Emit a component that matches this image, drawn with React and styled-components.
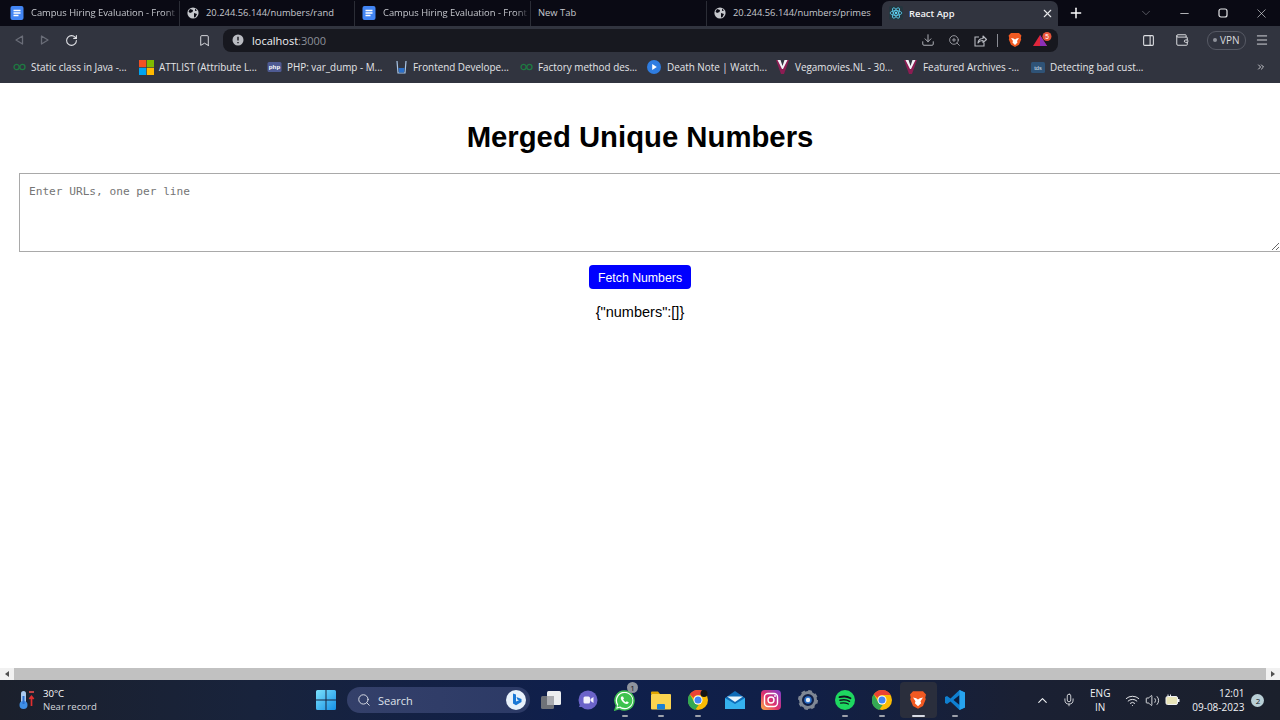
import React from 'react';
import styled, { createGlobalStyle } from 'styled-components';
import {
  RotateCw, Bookmark, Download, ZoomIn, PanelRight, Wallet, Menu, X, Plus, ChevronDown, Minus,
  Search, Mic, Wifi, Volume2, ChevronUp, ChevronsRight,
} from 'lucide-react';

const GlobalStyle = createGlobalStyle`
  html, body { margin: 0; padding: 0; height: 100%; overflow: hidden; background: #fff; }
  body { font-family: "Liberation Sans", Arial, sans-serif; }
  ::placeholder { color: #757575; }
`;

const ui = `"Open Sans", "Noto Sans", sans-serif`;

const Screen = styled.div`
  display: flex;
  flex-direction: column;
  width: 1280px;
  height: 720px;
  overflow: hidden;
`;

const TabStrip = styled.div`
  display: flex;
  align-items: flex-end;
  height: 26px;
  padding-left: 3px;
  box-sizing: border-box;
  background: #0a0a14;
  flex-shrink: 0;
`;

const Tab = styled.div`
  display: flex;
  align-items: center;
  gap: ${p => (p.$active ? 6 : 7)}px;
  width: ${p => p.$w}px;
  height: 25px;
  padding: 0 0 ${p => (p.$active ? 1 : 2)}px 7px;
  box-sizing: border-box;
  flex-shrink: 0;
  white-space: nowrap;
  font: ${p => (p.$active ? 600 : 400)} 9.4px ${ui};
  color: ${p => (p.$active ? '#f2f3f5' : '#c6c8ce')};
  background: ${p => (p.$active ? '#31343f' : 'transparent')};
  border-radius: ${p => (p.$active ? '7px 7px 0 0' : 0)};
  border-right: ${p => (p.$active || p.$last ? 0 : '1px solid #2b2d36')};
`;

const TabTitle = styled.span`
  flex: 1;
  -webkit-mask-image: ${p => (p.$fade ? 'linear-gradient(to right, #000 90%, transparent)' : 'none')};
  mask-image: ${p => (p.$fade ? 'linear-gradient(to right, #000 90%, transparent)' : 'none')};
`;

const TabClose = styled.span`
  display: flex;
  margin-right: 4px;
  color: #e8e9ec;
`;

const WindowControls = styled.div`
  display: flex;
  align-items: center;
  flex: 1;
  height: 26px;
  color: #e6e7ea;
`;

const NewTab = styled.span`
  display: flex;
  margin-left: 10px;
  margin-right: 43px;
  color: #fff;
`;

const WinButton = styled.span`
  display: flex;
  justify-content: center;
  width: 38.5px;
  color: ${p => (p.$dim ? '#8b8d96' : '#e6e7ea')};
`;

const Toolbar = styled.div`
  display: flex;
  align-items: center;
  height: 28px;
  background: #31343f;
  flex-shrink: 0;
`;

const NavGroup = styled.div`
  display: flex;
  align-items: center;
  width: 198px;
  padding-left: 13px;
  box-sizing: border-box;
  gap: 14px;
`;

const NavIcon = styled.span`
  display: flex;
  color: ${p => (p.$dim ? '#6a6d78' : '#e3e4e8')};
`;

const AddressBar = styled.div`
  display: flex;
  align-items: center;
  width: 835px;
  height: 23px;
  margin-left: 12px;
  padding: 0 5px 0 9px;
  box-sizing: border-box;
  background: #17181f;
  border-radius: 8px;
  font: 400 11px ${ui};
`;

const Url = styled.span`
  margin-left: 8px;
  flex: 1;
  color: #f0f1f3;
  span { color: #8d9099; }
`;

const AddressTools = styled.div`
  display: flex;
  align-items: center;
  gap: 13px;
  color: #b7b9c0;
`;

const Divider = styled.span`
  width: 1px;
  height: 13px;
  margin: 0 -4px 0 -3px;
  background: #8a8c94;
`;

const ShieldSlot = styled.span`
  display: flex;
  margin-right: -3px;
`;

const RightTools = styled.div`
  display: flex;
  align-items: center;
  margin-left: 84px;
  gap: 20px;
  color: #dcdde1;
`;

const VpnPill = styled.div`
  display: flex;
  align-items: center;
  gap: 3px;
  height: 17px;
  padding: 0 5px;
  border: 1px solid #565964;
  border-radius: 9px;
  font: 400 10px ${ui};
  color: #d8d9dd;
  margin-left: -2px;
  margin-right: -11px;
  i { width: 4px; height: 4px; border-radius: 50%; background: #8f929b; }
`;

const BookmarksBar = styled.div`
  display: flex;
  align-items: center;
  height: 29px;
  padding: 0 0 3px 13px;
  box-sizing: border-box;
  background: #31343f;
  flex-shrink: 0;
  font: 400 9.9px ${ui};
  color: #e4e5e8;
`;

const BookmarkItem = styled.div`
  display: flex;
  align-items: center;
  gap: 5px;
  width: ${p => p.$w}px;
  white-space: nowrap;
  flex-shrink: 0;
`;

const MoreBookmarks = styled.span`
  display: flex;
  margin-left: 107px;
`;

const Viewport = styled.main`
  flex: 1;
  display: flex;
  flex-direction: column;
  align-items: center;
  overflow: hidden;
  background: #fff;
  padding-top: 35px;
  min-height: 0;
`;

const Title = styled.h1`
  margin: 0 0 17px;
  font-size: 29.3px;
  line-height: 38px;
  font-weight: 700;
  color: #000;
`;

const UrlInput = styled.textarea`
  align-self: flex-start;
  display: block;
  width: 1262px;
  height: 79px;
  margin: 0 0 13px 19px;
  padding: 10px 9px;
  box-sizing: border-box;
  flex-shrink: 0;
  border: 1px solid #a9a9a9;
  font: 11.15px/15px "DejaVu Sans Mono", monospace;
  outline: none;
`;

const FetchButton = styled.button`
  width: 102px;
  height: 24px;
  padding: 1px 0 0;
  border: 0;
  border-radius: 4px;
  background: #0000ff;
  color: #fff;
  font: 400 12.3px "Liberation Sans", Arial, sans-serif;
`;

const Result = styled.div`
  margin-top: 15px;
  font-size: 14.5px;
  line-height: 17px;
  color: #000;
`;

const ScrollBar = styled.div`
  display: flex;
  align-items: center;
  justify-content: space-between;
  height: 12px;
  flex-shrink: 0;
  background: #c1c1c1;
`;

const ScrollArrow = styled.span`
  display: flex;
  align-items: center;
  justify-content: center;
  width: 14px;
  height: 12px;
  background: #f1f1f1;
  &::before {
    content: '';
    border-style: solid;
    border-width: 3px 0 3px 4px;
    border-color: transparent transparent transparent #505050;
    transform: ${p => (p.$left ? 'rotate(180deg)' : 'none')};
  }
`;

const Taskbar = styled.footer`
  display: flex;
  align-items: center;
  height: 40px;
  flex-shrink: 0;
  background: linear-gradient(to right, #1b202c 0%, #18233c 20%, #0f1f4c 45%, #101f47 62%, #1a2033 80%, #1b202c 100%);
  color: #fff;
  font: 400 9.6px ${ui};
`;

const Weather = styled.div`
  display: flex;
  align-items: center;
  gap: 7px;
  width: 316px;
  padding-left: 18px;
  box-sizing: border-box;
  line-height: 13px;
  small { display: block; font-size: 9.6px; color: #d5d7dc; }
`;

const SearchBox = styled.div`
  display: flex;
  align-items: center;
  gap: 7px;
  width: 183px;
  height: 26px;
  margin-left: 11px;
  padding-left: 10px;
  box-sizing: border-box;
  position: relative;
  border-radius: 13px;
  background: linear-gradient(to right, #34406a, #2c3a66);
  font-size: 11px;
  color: #dfe2ea;
`;

const BingBadge = styled.span`
  position: absolute;
  right: 4px;
  top: 3px;
  display: flex;
`;

const Dock = styled.div`
  display: flex;
  align-items: center;
  margin-left: 3px;
`;

const DockItem = styled.div`
  position: relative;
  display: flex;
  align-items: center;
  justify-content: center;
  width: 36.7px;
  height: 36px;
  border-radius: 4px;
  background: ${p => (p.$active ? '#2a2e3c' : 'transparent')};
  &::after {
    content: '';
    display: ${p => (p.$open ? 'block' : 'none')};
    position: absolute;
    bottom: 1px;
    left: 50%;
    width: ${p => (p.$active ? 13 : 6)}px;
    height: 2px;
    margin-left: ${p => (p.$active ? -6.5 : -3)}px;
    border-radius: 1px;
    background: ${p => (p.$active ? '#d8dbe3' : '#9da1ab')};
  }
`;

const Count = styled.span`
  position: absolute;
  top: 0;
  right: 5px;
  width: 11px;
  height: 11px;
  border-radius: 50%;
  background: #8f949e;
  font-size: 8px;
  line-height: 11px;
  text-align: center;
  color: #10131c;
`;

const Tray = styled.div`
  display: flex;
  align-items: center;
  flex: 1;
  color: #f0f1f4;
  padding-left: 62px;
`;

const MicSlot = styled.span`
  display: flex;
  margin-left: 12px;
`;

const Lang = styled.div`
  width: 24px;
  margin-left: 12px;
  text-align: center;
  line-height: 14px;
  font-size: 10px;
`;

const TrayIcons = styled.div`
  display: flex;
  align-items: center;
  gap: 5px;
  margin-left: 13px;
`;

const Clock = styled.div`
  margin-left: 12px;
  text-align: right;
  line-height: 14px;
  font-size: 10px;
`;

const Notice = styled.span`
  width: 13px;
  height: 13px;
  margin-left: 7px;
  border-radius: 50%;
  background: #b9cfd6;
  color: #12161f;
  font-size: 8px;
  line-height: 13px;
  text-align: center;
`;

// favicons and app logos
const DocsIcon = () => (
  <svg width="14" height="14" viewBox="0 0 14 14">
    <rect x="0.5" width="13" height="14" rx="2" fill="#4285f4" />
    <path d="M3.5 4.5h7M3.5 7h7M3.5 9.5h5" stroke="#fff" strokeWidth="1.3" />
  </svg>
);

const GlobeIcon = () => (
  <svg width="12" height="12" viewBox="0 0 12 12">
    <circle cx="6" cy="6" r="5.6" fill="#c5c7cc" />
    <path d="M3 2l3 1-.5 2L3 6 1.5 4.5zM7 6l3 1-1.5 3L7 10.5z M8 1.5l2 2-2 .5z" fill="#0a0a14" />
  </svg>
);

const ReactIcon = () => (
  <svg width="14" height="14" viewBox="-12 -12 24 24" fill="none" stroke="#61dafb" strokeWidth="1.3">
    <rect x="-12" y="-12" width="24" height="24" rx="3" fill="#24363f" stroke="none" />
    <circle r="2" fill="#61dafb" stroke="none" />
    <ellipse rx="10" ry="4" />
    <ellipse rx="10" ry="4" transform="rotate(60)" />
    <ellipse rx="10" ry="4" transform="rotate(120)" />
  </svg>
);

const Triangle = ({ left }) => (
  <svg width="12" height="12" viewBox="0 0 12 12" fill="none" stroke="currentColor" strokeWidth="1.3">
    <path d={left ? 'M9.5 2v8L3 6z' : 'M2.5 2v8L9 6z'} strokeLinejoin="round" />
  </svg>
);

const InfoDot = () => (
  <svg width="12" height="12" viewBox="0 0 12 12">
    <circle cx="6" cy="6" r="5.5" fill="#b9bbc1" />
    <path d="M6 2.8v3.6M6 8v1.2" stroke="#17181f" strokeWidth="1.4" />
  </svg>
);

const ShareIcon = () => (
  <svg width="13" height="13" viewBox="0 0 13 13" fill="none" stroke="currentColor" strokeWidth="1.1">
    <path d="M5 3H1v9h9V8.500" />
    <path d="M4 9c.3-3 2.500-4.500 5-4.500V2l3.500 3.500L9 8.500V6.500C7 6.500 5 7 4 9z" strokeLinejoin="round" />
  </svg>
);

const BraveIcon = ({ size = 16 }) => (
  <svg width={size} height={size} viewBox="0 0 16 16">
    <path d="M4 1h8l2.4 2.6-.6 2.4.4 1.4-2.2 5.4L8 15l-4-2.2-2.2-5.4.4-1.4-.6-2.4z" fill="#f15a22" />
    <path d="M4 6l2.5.5L8 7.5l1.5-1L12 6l-2 3 .5 1.5L8 13l-2.5-2.5L6 9z" fill="#fff" />
  </svg>
);

const RewardsIcon = () => (
  <svg width="20" height="16" viewBox="0 0 20 16">
    <path d="M0 14L7 3l7 11z" fill="#e0263c" />
    <path d="M7 3l7 11H7z" fill="#8b2fb8" />
    <circle cx="14" cy="4.5" r="4.5" fill="#e8553a" />
    <text x="14" y="6.8" fontSize="6.5" textAnchor="middle" fill="#fff" fontFamily="Liberation Sans">5</text>
  </svg>
);

const LeafIcon = () => (
  <svg width="13" height="8" viewBox="0 0 13 8" fill="none" stroke="#1f7a42" strokeWidth="1.3">
    <circle cx="3.6" cy="4" r="2.6" />
    <circle cx="9.4" cy="4" r="2.6" />
  </svg>
);

const MsIcon = () => (
  <svg width="15" height="15" viewBox="0 0 15 15">
    <rect width="7.2" height="7.2" fill="#f25022" />
    <rect x="7.8" width="7.2" height="7.2" fill="#7fba00" />
    <rect y="7.8" width="7.2" height="7.2" fill="#00a4ef" />
    <rect x="7.8" y="7.8" width="7.2" height="7.2" fill="#ffb900" />
  </svg>
);

const PhpIcon = () => (
  <svg width="15" height="10" viewBox="0 0 14 10">
    <rect width="14" height="10" rx="1.5" fill="#4f5b93" />
    <text x="7" y="7.4" fontSize="6.2" fontWeight="700" textAnchor="middle" fill="#fff" fontFamily="Liberation Sans">php</text>
  </svg>
);

const CupIcon = () => (
  <svg width="13" height="14" viewBox="-1 0 13 14" fill="none">
    <path d="M1 1l1 12h7l1-12" stroke="#a9c6e8" strokeWidth="1.2" />
    <path d="M2.5 8h6l-.5 4.5H3z" fill="#2a6fc9" />
  </svg>
);

const PlayIcon = () => (
  <svg width="15" height="14" viewBox="0 0 15 14">
    <circle cx="7" cy="7" r="7" fill="#2f7de1" />
    <path d="M5.2 4l4.6 3-4.6 3z" fill="#fff" />
  </svg>
);

const VegaIcon = () => (
  <svg width="14" height="14" viewBox="0 0 14 14">
    <path d="M0 0h4l2.5 7L9 0h4L8 14H5z" fill="#8c1d53" />
    <path d="M1.5 0h3l2 6 2-6h3L7 9H6z" fill="#f2f2f6" />
  </svg>
);

const TdsIcon = () => (
  <svg width="14" height="11" viewBox="0 0 14 11">
    <rect width="14" height="11" rx="1.5" fill="#2f5377" />
    <text x="7" y="7.6" fontSize="5.6" textAnchor="middle" fill="#dbe6ef" fontFamily="Liberation Sans">tds</text>
  </svg>
);

const ThermoIcon = () => (
  <svg width="18" height="20" viewBox="0 0 18 20">
    <rect x="3" y="1" width="5" height="13" rx="2.5" fill="#a9c8ee" />
    <circle cx="5.5" cy="15" r="4" fill="#3f8fe6" />
    <rect x="4.5" y="6" width="2" height="8" fill="#2a6fd0" />
    <path d="M11 2h5" stroke="#e84b4b" strokeWidth="1.6" />
    <path d="M13.5 16V7M11.3 9l2.2-2.6L15.7 9" stroke="#e02f2f" strokeWidth="1.7" fill="none" />
  </svg>
);

const WindowsIcon = () => (
  <svg width="20" height="20" viewBox="0 0 20 20">
    <defs>
      <linearGradient id="win" x1="0" y1="0" x2="1" y2="1">
        <stop offset="0" stopColor="#7be0fb" />
        <stop offset="1" stopColor="#1590e6" />
      </linearGradient>
    </defs>
    <path d="M0 1.5A1.5 1.5 0 0 1 1.5 0h8v9.5H0zM10.500 0h8A1.500 1.500 0 0 1 20 1.500v8h-9.500zM0 10.500h9.500V20h-8A1.500 1.500 0 0 1 0 18.500zM10.500 10.500H20v8a1.500 1.500 0 0 1-1.500 1.500h-8z" fill="url(#win)" />
  </svg>
);

const BingIcon = () => (
  <svg width="20" height="20" viewBox="0 0 20 20">
    <circle cx="10" cy="10" r="10" fill="#e8f1fb" />
    <path d="M7 3.500l3 1v7l3-1.300-1.700-.8-.8-2.300 5 1.800v3l-5.500 3.300-3-1.700z" fill="#1b78d6" />
  </svg>
);

const TaskViewIcon = () => (
  <svg width="20" height="20" viewBox="0 0 20 20">
    <rect x="0" y="6" width="13" height="13" rx="1.500" fill="#6f7278" />
    <rect x="6" y="1" width="14" height="14" rx="1.500" fill="#eceef0" />
    <rect x="6" y="6" width="7" height="9" fill="#a9abb0" />
  </svg>
);

const MeetIcon = () => (
  <svg width="20" height="20" viewBox="0 0 20 20">
    <circle cx="10" cy="10" r="9.500" fill="#6b63c9" />
    <path d="M1 17l2-5 4 5z" fill="#6b63c9" />
    <rect x="5.500" y="6.500" width="6.500" height="7" rx="1.500" fill="#f3f2fc" />
    <path d="M12.500 9l3-2v6l-3-2z" fill="#f3f2fc" />
  </svg>
);

const WhatsappIcon = () => (
  <svg width="21" height="21" viewBox="0 0 21 21">
    <path d="M10.500 1a9.500 9.500 0 0 0-8 14.600L1 20l4.500-1.400A9.500 9.500 0 1 0 10.500 1z" fill="#fff" stroke="#3fc152" strokeWidth="1.500" />
    <path d="M10.500 3a7.500 7.500 0 0 0-6.300 11.500l-.8 2.800 2.900-.9A7.500 7.500 0 1 0 10.500 3z" fill="#3ec34f" />
    <path d="M7.500 6.500c-1 1-1 2.500.5 4.500s3.500 3.200 5 3c1-.2 1.700-.8 1.700-1.700l-2-1-.9.900c-1-.4-2.200-1.600-2.700-2.700l.9-.9-1-2.100z" fill="#fff" />
  </svg>
);

const FolderIcon = () => (
  <svg width="20" height="19" viewBox="0 0 20 19">
    <path d="M0 1.500A1 1 0 0 1 1 .5h6l2 2.500H0z" fill="#e0a500" />
    <rect y="3" width="20" height="15.500" rx="1" fill="#fbd34f" />
    <rect x="6" y="13" width="8" height="5.500" rx="1" fill="#1b7fd4" />
  </svg>
);

const ChromeIcon = ({ dot }) => (
  <svg width="20" height="20" viewBox="0 0 20 20">
    <circle cx="10" cy="10" r="10" fill="#fbbc04" />
    <path d="M10 0a10 10 0 0 1 8.700 5H10a5 5 0 0 0-4.500 2.900L1.800 4.300A10 10 0 0 1 10 0z" fill="#ea4335" />
    <path d="M1.800 4.300l4.400 7.800a5 5 0 0 0 4.500 2.900L7 20A10 10 0 0 1 1.800 4.300z" fill="#34a853" />
    <circle cx="10" cy="10" r="4.500" fill="#fff" />
    <circle cx="10" cy="10" r="3.500" fill="#4285f4" />
    {dot && <circle cx="16" cy="3.500" r="3.500" fill="#141414" />}
  </svg>
);

const MailIcon = () => (
  <svg width="20" height="18" viewBox="0 0 20 18">
    <path d="M0 7l10-7 10 7v11H0z" fill="#0f6cb8" />
    <path d="M0 7l10 6 10-6v11H0z" fill="#35b1ee" />
    <path d="M2 5.500h16L10 11z" fill="#eaf6fd" />
  </svg>
);

const InstagramIcon = () => (
  <svg width="20" height="20" viewBox="0 0 20 20" fill="none">
    <defs>
      <linearGradient id="insta" x1="0" y1="1" x2="1" y2="0">
        <stop offset="0" stopColor="#fdb545" />
        <stop offset="0.45" stopColor="#e1306c" />
        <stop offset="1" stopColor="#7a3fd0" />
      </linearGradient>
    </defs>
    <rect width="20" height="20" rx="4" fill="url(#insta)" />
    <rect x="3.500" y="3.500" width="13" height="13" rx="3.500" stroke="#fff" strokeWidth="1.400" />
    <circle cx="10" cy="10" r="3" stroke="#fff" strokeWidth="1.400" />
    <circle cx="14" cy="6" r="0.900" fill="#fff" />
  </svg>
);

const GearIcon = () => (
  <svg width="20" height="20" viewBox="0 0 20 20">
    <circle cx="10" cy="10" r="7.500" fill="none" stroke="#7f8794" strokeWidth="3" />
    <circle cx="10" cy="10" r="8.500" fill="none" stroke="#7f8794" strokeWidth="3" strokeDasharray="3.500 3.170" />
    <circle cx="10" cy="10" r="3.800" fill="#2a6fc9" />
    <circle cx="10" cy="10" r="2.200" fill="#e8eef6" />
  </svg>
);

const SpotifyIcon = () => (
  <svg width="20" height="20" viewBox="0 0 20 20" fill="none" stroke="#10141f" strokeLinecap="round">
    <circle cx="10" cy="10" r="10" fill="#1ed760" stroke="none" />
    <path d="M4.500 7.200c3.500-1 8-.8 11 1" strokeWidth="1.800" />
    <path d="M5 10.300c3-.8 6.800-.6 9.500 1" strokeWidth="1.500" />
    <path d="M5.500 13.200c2.600-.6 5.500-.4 7.800.9" strokeWidth="1.200" />
  </svg>
);

const VscodeIcon = () => (
  <svg width="20" height="20" viewBox="0 0 20 20">
    <path d="M14.500 0L20 2.500v15L14.500 20 5.500 11.500 2 14 0 13V7l2-1 3.500 2.500z" fill="#0f7fd0" />
    <path d="M14.500 5L8.500 10l6 5z" fill="#0b1d3f" />
    <path d="M14.500 0L20 2.500v15L14.500 20z" fill="#27a3ee" />
  </svg>
);

const BatteryIcon = () => (
  <svg width="15" height="15" viewBox="0 0 15 15">
    <path d="M3 1.500v2M5.500 1.500v2" stroke="currentColor" strokeWidth="1" />
    <rect x="1" y="3.500" width="11.500" height="8" rx="1.500" fill="#e8e4b8" stroke="currentColor" strokeWidth="1" />
    <rect x="12.500" y="6" width="2" height="3" fill="currentColor" />
  </svg>
);

const tabs = [
  { w: 177, icon: <DocsIcon />, title: 'Campus Hiring Evaluation - Front', fade: true },
  { w: 175, icon: <GlobeIcon />, title: '20.244.56.144/numbers/rand' },
  { w: 176, icon: <DocsIcon />, title: 'Campus Hiring Evaluation - Front', fade: true },
  { w: 176, title: 'New Tab' },
  { w: 175, icon: <GlobeIcon />, title: '20.244.56.144/numbers/primes', last: true },
];

const bookmarks = [
  { w: 126, icon: <LeafIcon />, title: 'Static class in Java -...' },
  { w: 128, icon: <MsIcon />, title: 'ATTLIST (Attribute L...' },
  { w: 128, icon: <PhpIcon />, title: 'PHP: var_dump - M...' },
  { w: 125, icon: <CupIcon />, title: 'Frontend Develope...' },
  { w: 127, icon: <LeafIcon />, title: 'Factory method des...' },
  { w: 129, icon: <PlayIcon />, title: 'Death Note | Watch...' },
  { w: 128, icon: <VegaIcon />, title: 'Vegamovies.NL - 30...' },
  { w: 127, icon: <VegaIcon />, title: 'Featured Archives -...' },
  { w: 118, icon: <TdsIcon />, title: 'Detecting bad cust...' },
];

const dockApps = [
  { icon: <TaskViewIcon /> },
  { icon: <MeetIcon /> },
  { icon: <WhatsappIcon />, open: true, count: 1 },
  { icon: <FolderIcon />, open: true },
  { icon: <ChromeIcon dot />, open: true },
  { icon: <MailIcon /> },
  { icon: <InstagramIcon /> },
  { icon: <GearIcon /> },
  { icon: <SpotifyIcon />, open: true },
  { icon: <ChromeIcon />, open: true },
  { icon: <BraveIcon size={20} />, open: true, active: true },
  { icon: <VscodeIcon />, open: true },
];

function App() {
  return (
    <Screen>
      <GlobalStyle />
      <TabStrip>
        {tabs.map((tab, i) => (
          <Tab key={i} $w={tab.w} $last={tab.last}>
            {tab.icon}
            <TabTitle $fade={tab.fade}>{tab.title}</TabTitle>
          </Tab>
        ))}
        <Tab $w={176} $active>
          <ReactIcon />
          <TabTitle>React App</TabTitle>
          <TabClose><X size={13} /></TabClose>
        </Tab>
        <WindowControls>
          <NewTab><Plus size={16} strokeWidth={2.2} /></NewTab>
          <WinButton $dim><ChevronDown size={14} strokeWidth={1} /></WinButton>
          <WinButton><Minus size={13} strokeWidth={1.4} /></WinButton>
          <WinButton><svg width="10" height="10" viewBox="0 0 10 10" fill="none" stroke="currentColor" strokeWidth="1.2"><rect x="1" y="1" width="8" height="8" rx="2" /></svg></WinButton>
          <WinButton><X size={15} strokeWidth={1} /></WinButton>
        </WindowControls>
      </TabStrip>
      <Toolbar>
        <NavGroup>
          <NavIcon $dim><Triangle left /></NavIcon>
          <NavIcon $dim><Triangle /></NavIcon>
          <NavIcon><RotateCw size={13} strokeWidth={2} /></NavIcon>
        </NavGroup>
        <NavIcon><Bookmark size={13} strokeWidth={1.7} /></NavIcon>
        <AddressBar>
          <InfoDot />
          <Url>localhost<span>:3000</span></Url>
          <AddressTools>
            <Download size={14} strokeWidth={1.6} />
            <ZoomIn size={13} strokeWidth={1.4} />
            <ShareIcon />
            <Divider />
            <ShieldSlot><BraveIcon /></ShieldSlot>
            <RewardsIcon />
          </AddressTools>
        </AddressBar>
        <RightTools>
          <PanelRight size={13} strokeWidth={2} />
          <Wallet size={14} strokeWidth={1.7} />
          <VpnPill><i />VPN</VpnPill>
          <Menu size={14} strokeWidth={1.6} />
        </RightTools>
      </Toolbar>
      <BookmarksBar>
        {bookmarks.map(b => (
          <BookmarkItem key={b.title} $w={b.w}>
            {b.icon}
            {b.title}
          </BookmarkItem>
        ))}
        <MoreBookmarks><ChevronsRight size={10} strokeWidth={2} /></MoreBookmarks>
      </BookmarksBar>
      <Viewport>
        <Title>Merged Unique Numbers</Title>
        <UrlInput placeholder="Enter URLs, one per line" />
        <FetchButton>Fetch Numbers</FetchButton>
        <Result>{'{"numbers":[]}'}</Result>
      </Viewport>
      <ScrollBar>
        <ScrollArrow $left />
        <ScrollArrow />
      </ScrollBar>
      <Taskbar>
        <Weather>
          <ThermoIcon />
          <div>
            30°C
            <small>Near record</small>
          </div>
        </Weather>
        <WindowsIcon />
        <SearchBox>
          <Search size={14} strokeWidth={1.6} />
          Search
          <BingBadge><BingIcon /></BingBadge>
        </SearchBox>
        <Dock>
          {dockApps.map((app, i) => (
            <DockItem key={i} $open={app.open} $active={app.active}>
              {app.icon}
              {app.count && <Count>{app.count}</Count>}
            </DockItem>
          ))}
        </Dock>
        <Tray>
          <ChevronUp size={15} strokeWidth={1.8} />
          <MicSlot><Mic size={14} strokeWidth={1.4} /></MicSlot>
          <Lang>ENG<br />IN</Lang>
          <TrayIcons>
            <Wifi size={15} strokeWidth={1.5} />
            <Volume2 size={15} strokeWidth={1.4} />
            <BatteryIcon />
          </TrayIcons>
          <Clock>12:01<br />09-08-2023</Clock>
          <Notice>2</Notice>
        </Tray>
      </Taskbar>
    </Screen>
  );
}

export default App;
